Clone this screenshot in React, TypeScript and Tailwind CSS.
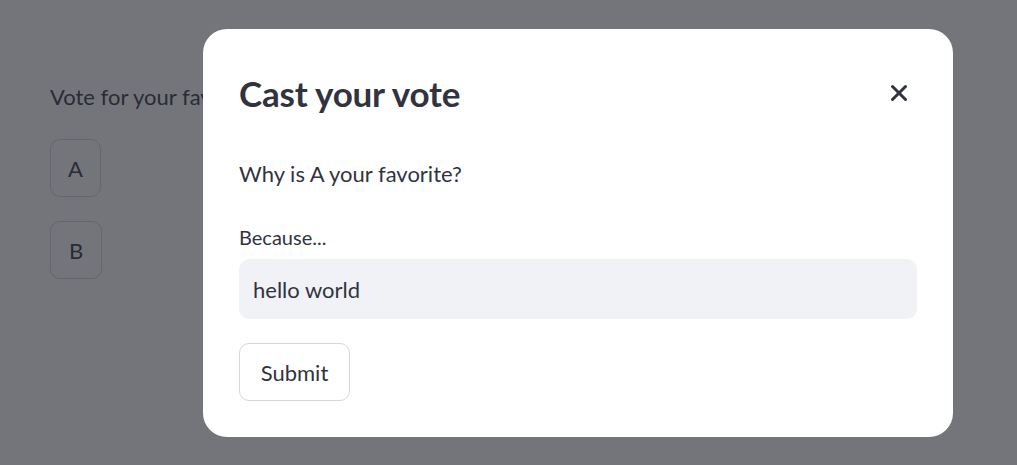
import { X } from "lucide-react";

export default function App() {
  return (
    <div
      className="relative h-[465px] w-full overflow-hidden bg-white text-[#31333f]"
      style={{ fontFamily: '"Source Sans Pro", Lato, "Noto Sans", sans-serif' }}
    >
      {/* page under the dialog */}
      <div className="flex flex-col items-start pl-[50px] pt-[82px]">
        <p className="text-[22px] leading-[30px]">Vote for your favorite</p>
        <div className="mt-[27px] flex flex-col gap-6">
          <button className="h-[58px] w-[51px] rounded-[10px] border border-[rgba(49,51,63,0.2)] text-[22px]">
            A
          </button>
          <button className="h-[58px] w-[52px] rounded-[10px] border border-[rgba(49,51,63,0.2)] text-[22px]">
            B
          </button>
        </div>
      </div>

      {/* modal */}
      <div className="absolute inset-0 bg-[rgba(38,39,48,0.64)] pl-[203px] pt-[29px]">
        <div className="flex h-[408px] w-[750px] flex-col rounded-[24px] bg-white px-[36px] pt-[44px]">
          <div className="flex h-[40px] items-center justify-between">
            <h2 className="text-[35px] font-bold leading-[40px] tracking-[-0.2px]">Cast your vote</h2>
            <X className="mr-[5px] h-[26px] w-[26px]" strokeWidth={2.8} />
          </div>
          <p className="mt-[46px] text-[22px] leading-[30px]">Why is A your favorite?</p>
          <label className="mt-[34px] text-[20px] leading-[28px]">Because...</label>
          <div className="mt-[8px] flex h-[60px] items-center rounded-[10px] bg-[#f0f2f6] px-[14px] text-[22px]">
            hello world
          </div>
          <button className="mt-[24px] h-[58px] w-[111px] rounded-[10px] border border-[#d6d6d9] bg-white text-[22px]">
            Submit
          </button>
        </div>
      </div>
    </div>
  );
}
